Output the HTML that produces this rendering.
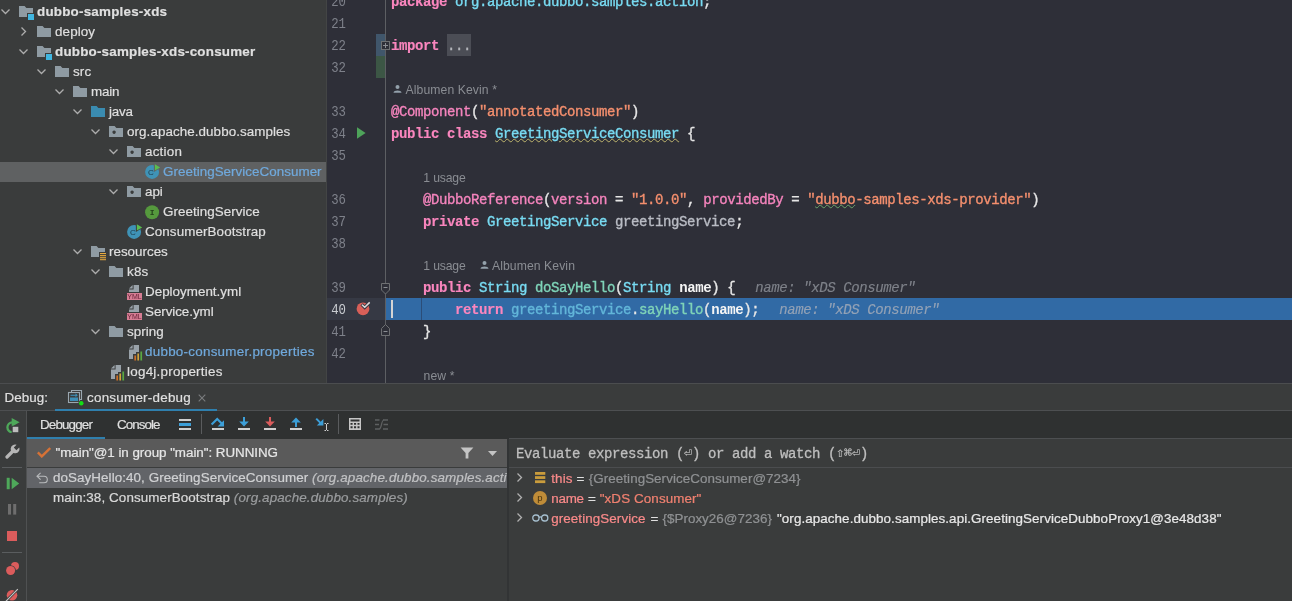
<!DOCTYPE html>
<html>
<head>
<meta charset="utf-8">
<title>dubbo-samples-xds</title>
<style>
*{box-sizing:border-box;margin:0;padding:0}
html,body{width:1292px;height:601px;overflow:hidden;background:#3a3c3c}
body{position:relative;font-family:"Liberation Sans",sans-serif;font-size:13px;color:#dcdcdc;-webkit-font-smoothing:antialiased}
.abs{position:absolute}
.mono{font-family:"Liberation Mono",monospace}
/* project tree */
#tree,#ed,#dbg{will-change:transform}
#tree{position:absolute;left:0;top:0;width:326px;height:383px;background:#3a3c3c;overflow:hidden}
.tr{position:absolute;left:0;width:326px;height:20px;line-height:20px;white-space:nowrap}
.tr.sel{background:#5f6162}
.tr .t{position:absolute;top:0;-webkit-text-stroke:0.22px;font-size:13.4px;color:#dfdfdf;letter-spacing:0}
.tr .t.b{font-weight:bold}

.tr svg{position:absolute;overflow:visible}
/* editor */
#ed{position:absolute;left:327px;top:0;width:965px;height:383px;background:#2e2f38;overflow:hidden}
#split{position:absolute;left:326px;top:0;width:1px;height:383px;background:#434545}
.ln{position:absolute;left:0;width:19px;text-align:right;transform:scaleX(0.88);transform-origin:100% 50%;font-family:"Liberation Mono",monospace;font-size:14px;letter-spacing:0;color:#7e818a;height:22px;line-height:22px;margin-top:1px}
.cl{position:absolute;left:64px;height:22px;line-height:22px;white-space:pre;font-family:"Liberation Mono",monospace;font-size:14px;letter-spacing:-0.4px;color:#e6e6e6;margin-top:1px;-webkit-text-stroke:0.35px}
.hint{position:absolute;height:22px;line-height:22px;margin-top:1px;white-space:pre;font-family:"Liberation Sans",sans-serif;font-size:12.2px;color:#8a8d93}
.k{color:#fa86be;font-weight:bold;-webkit-text-stroke:0.15px}
.ty{color:#78dbf2}

.st{color:#f48f6e}
.at{color:#f584bd}
.fn{color:#7ed3b8}
.fd{color:#b9bcc4}
.w{color:#f4f4f4;font-weight:bold;-webkit-text-stroke:0}
.iv{color:#7e8189;font-style:italic;-webkit-text-stroke:0.15px}
.iv.s{color:#93a2b6}
.ty2{color:#62b6d9}
.fold{color:#b4b6bb}
.wav{text-decoration:underline wavy #bdb36c 1px;text-underline-offset:0px}
.typo{text-decoration:underline wavy #6aa56a 1px;text-underline-offset:0px}
.sym{font-family:"DejaVu Sans Mono","DejaVu Sans",monospace;font-size:13.3px;-webkit-text-stroke:0.2px;display:inline-block;width:8px;text-align:center;overflow:visible;letter-spacing:0;line-height:20px;vertical-align:top}
/* debug */
#dbg{position:absolute;left:0;top:383px;width:1292px;height:218px;background:#3a3c3c}
.ui{position:absolute;white-space:nowrap;-webkit-text-stroke:0.22px;font-size:13.4px;color:#dfdfdf;line-height:20px;height:20px}
</style>
</head>
<body>
<div id="tree">
<div class="tr" style="top:2px"><svg class="abs" style="left:-0.5px;top:3.9000000000000004px" width="11" height="11" viewBox="0 0 11 11"><path d="M1.5 3.5 L5.5 7.5 L9.5 3.5" fill="none" stroke="#adadad" stroke-width="1.3"/></svg><svg class="abs" style="left:18px;top:2px" width="16" height="16" viewBox="0 0 16 16"><path d="M1 2 H6.6 L8.4 4 H15 V9 H9 V13 H1 Z" fill="#8f9ba3"/><rect x="10" y="10" width="6" height="6" fill="#40b6e0"/></svg><span class="t b" style="left:37px;letter-spacing:0.224px">dubbo-samples-xds</span></div>
<div class="tr" style="top:22px"><svg class="abs" style="left:17.5px;top:4.1px" width="11" height="11" viewBox="0 0 11 11"><path d="M3.5 1.5 L7.5 5.5 L3.5 9.5" fill="none" stroke="#adadad" stroke-width="1.3"/></svg><svg class="abs" style="left:36px;top:2px" width="16" height="16" viewBox="0 0 16 16"><path d="M1 2 H6.6 L8.4 4 H15 V13 H1 Z" fill="#8f9ba3"/></svg><span class="t" style="left:55px;letter-spacing:0.122px">deploy</span></div>
<div class="tr" style="top:42px"><svg class="abs" style="left:17.5px;top:3.9000000000000004px" width="11" height="11" viewBox="0 0 11 11"><path d="M1.5 3.5 L5.5 7.5 L9.5 3.5" fill="none" stroke="#adadad" stroke-width="1.3"/></svg><svg class="abs" style="left:36px;top:2px" width="16" height="16" viewBox="0 0 16 16"><path d="M1 2 H6.6 L8.4 4 H15 V9 H9 V13 H1 Z" fill="#8f9ba3"/><rect x="10" y="10" width="6" height="6" fill="#40b6e0"/></svg><span class="t b" style="left:55px;letter-spacing:0.209px">dubbo-samples-xds-consumer</span></div>
<div class="tr" style="top:62px"><svg class="abs" style="left:35.5px;top:3.9000000000000004px" width="11" height="11" viewBox="0 0 11 11"><path d="M1.5 3.5 L5.5 7.5 L9.5 3.5" fill="none" stroke="#adadad" stroke-width="1.3"/></svg><svg class="abs" style="left:54px;top:2px" width="16" height="16" viewBox="0 0 16 16"><path d="M1 2 H6.6 L8.4 4 H15 V13 H1 Z" fill="#8f9ba3"/></svg><span class="t" style="left:73px;letter-spacing:0.114px">src</span></div>
<div class="tr" style="top:82px"><svg class="abs" style="left:53.5px;top:3.9000000000000004px" width="11" height="11" viewBox="0 0 11 11"><path d="M1.5 3.5 L5.5 7.5 L9.5 3.5" fill="none" stroke="#adadad" stroke-width="1.3"/></svg><svg class="abs" style="left:72px;top:2px" width="16" height="16" viewBox="0 0 16 16"><path d="M1 2 H6.6 L8.4 4 H15 V13 H1 Z" fill="#8f9ba3"/></svg><span class="t" style="left:91px;letter-spacing:-0.183px">main</span></div>
<div class="tr" style="top:102px"><svg class="abs" style="left:71.5px;top:3.9000000000000004px" width="11" height="11" viewBox="0 0 11 11"><path d="M1.5 3.5 L5.5 7.5 L9.5 3.5" fill="none" stroke="#adadad" stroke-width="1.3"/></svg><svg class="abs" style="left:90px;top:2px" width="16" height="16" viewBox="0 0 16 16"><path d="M1 2 H6.6 L8.4 4 H15 V13 H1 Z" fill="#3a8bb0"/></svg><span class="t" style="left:109px;letter-spacing:-0.245px">java</span></div>
<div class="tr" style="top:122px"><svg class="abs" style="left:89.5px;top:3.9000000000000004px" width="11" height="11" viewBox="0 0 11 11"><path d="M1.5 3.5 L5.5 7.5 L9.5 3.5" fill="none" stroke="#adadad" stroke-width="1.3"/></svg><svg class="abs" style="left:108px;top:2px" width="16" height="16" viewBox="0 0 16 16"><path fill-rule="evenodd" d="M1 2 H6.6 L8.4 4 H15 V13 H1 Z M6.1 6.5 a1.7 1.7 0 1 0 0.001 0 Z" fill="#8f9ba3"/></svg><span class="t" style="left:127px;letter-spacing:0.077px">org.apache.dubbo.samples</span></div>
<div class="tr" style="top:142px"><svg class="abs" style="left:107.5px;top:3.9000000000000004px" width="11" height="11" viewBox="0 0 11 11"><path d="M1.5 3.5 L5.5 7.5 L9.5 3.5" fill="none" stroke="#adadad" stroke-width="1.3"/></svg><svg class="abs" style="left:126px;top:2px" width="16" height="16" viewBox="0 0 16 16"><path fill-rule="evenodd" d="M1 2 H6.6 L8.4 4 H15 V13 H1 Z M6.1 6.5 a1.7 1.7 0 1 0 0.001 0 Z" fill="#8f9ba3"/></svg><span class="t" style="left:145px;letter-spacing:0.228px">action</span></div>
<div class="tr sel" style="top:162px"><svg class="abs" style="left:144px;top:2px" width="16" height="16" viewBox="0 0 16 16"><circle cx="8.1" cy="7.9" r="7" fill="#3f93b7"/><path d="M9.9 -1.4 L17.4 3.3 L9.9 8 Z" fill="#5f6162"/><path d="M10.9 0.2 L16.2 3.4 L10.9 6.6 Z" fill="#5bbd4f"/><text x="6.9" y="10.6" font-family="Liberation Sans,sans-serif" font-size="8" text-anchor="middle" fill="#1f3a48">C</text></svg><span class="t" style="left:163px;letter-spacing:0.036px;color:#70a9dc">GreetingServiceConsumer</span></div>
<div class="tr" style="top:182px"><svg class="abs" style="left:107.5px;top:3.9000000000000004px" width="11" height="11" viewBox="0 0 11 11"><path d="M1.5 3.5 L5.5 7.5 L9.5 3.5" fill="none" stroke="#adadad" stroke-width="1.3"/></svg><svg class="abs" style="left:126px;top:2px" width="16" height="16" viewBox="0 0 16 16"><path fill-rule="evenodd" d="M1 2 H6.6 L8.4 4 H15 V13 H1 Z M6.1 6.5 a1.7 1.7 0 1 0 0.001 0 Z" fill="#8f9ba3"/></svg><span class="t" style="left:145px;letter-spacing:-0.025px">api</span></div>
<div class="tr" style="top:202px"><svg class="abs" style="left:144px;top:2px" width="16" height="16" viewBox="0 0 16 16"><circle cx="8.1" cy="8.3" r="7" fill="#55993d"/><text x="8.1" y="10.9" font-family="Liberation Mono,monospace" font-size="8" font-weight="bold" text-anchor="middle" fill="#23421a">I</text></svg><span class="t" style="left:163px;letter-spacing:0.046px">GreetingService</span></div>
<div class="tr" style="top:222px"><svg class="abs" style="left:126px;top:2px" width="16" height="16" viewBox="0 0 16 16"><circle cx="8.1" cy="7.9" r="7" fill="#3f93b7"/><path d="M9.9 -1.4 L17.4 3.3 L9.9 8 Z" fill="#3a3c3c"/><path d="M10.9 0.2 L16.2 3.4 L10.9 6.6 Z" fill="#5bbd4f"/><text x="6.9" y="10.6" font-family="Liberation Sans,sans-serif" font-size="8" text-anchor="middle" fill="#1f3a48">C</text></svg><span class="t" style="left:145px;letter-spacing:0.1px">ConsumerBootstrap</span></div>
<div class="tr" style="top:242px"><svg class="abs" style="left:71.5px;top:3.9000000000000004px" width="11" height="11" viewBox="0 0 11 11"><path d="M1.5 3.5 L5.5 7.5 L9.5 3.5" fill="none" stroke="#adadad" stroke-width="1.3"/></svg><svg class="abs" style="left:90px;top:2px" width="16" height="16" viewBox="0 0 16 16"><path d="M1 2 H6.6 L8.4 4 H15 V8 H9 V13 H1 Z" fill="#8f9ba3"/><g fill="#e9ab3f"><rect x="10" y="9" width="6" height="1.1"/><rect x="10" y="11.1" width="6" height="1.1"/><rect x="10" y="13.2" width="6" height="1.1"/><rect x="10" y="15.2" width="6" height="1"/></g></svg><span class="t" style="left:109px;letter-spacing:0.0px">resources</span></div>
<div class="tr" style="top:262px"><svg class="abs" style="left:89.5px;top:3.9000000000000004px" width="11" height="11" viewBox="0 0 11 11"><path d="M1.5 3.5 L5.5 7.5 L9.5 3.5" fill="none" stroke="#adadad" stroke-width="1.3"/></svg><svg class="abs" style="left:108px;top:2px" width="16" height="16" viewBox="0 0 16 16"><path d="M1 2 H6.6 L8.4 4 H15 V13 H1 Z" fill="#8f9ba3"/></svg><span class="t" style="left:127px;letter-spacing:0.185px">k8s</span></div>
<div class="tr" style="top:282px"><svg class="abs" style="left:126px;top:2px" width="16" height="16" viewBox="0 0 16 16"><path d="M7.6 1 H13 V8 H3 V5.6 H7.6 Z" fill="#99a2a9"/><path d="M6.6 1 L3 4.6 H6.6 Z" fill="#99a2a9"/><rect x="1" y="9" width="15" height="7" fill="#d67d93"/><text x="8.5" y="15.2" font-family="Liberation Sans,sans-serif" font-size="7" text-anchor="middle" fill="#6a2238" letter-spacing="0.1">YML</text></svg><span class="t" style="left:145px;letter-spacing:0.014px">Deployment.yml</span></div>
<div class="tr" style="top:302px"><svg class="abs" style="left:126px;top:2px" width="16" height="16" viewBox="0 0 16 16"><path d="M7.6 1 H13 V8 H3 V5.6 H7.6 Z" fill="#99a2a9"/><path d="M6.6 1 L3 4.6 H6.6 Z" fill="#99a2a9"/><rect x="1" y="9" width="15" height="7" fill="#d67d93"/><text x="8.5" y="15.2" font-family="Liberation Sans,sans-serif" font-size="7" text-anchor="middle" fill="#6a2238" letter-spacing="0.1">YML</text></svg><span class="t" style="left:145px;letter-spacing:-0.055px">Service.yml</span></div>
<div class="tr" style="top:322px"><svg class="abs" style="left:89.5px;top:3.9000000000000004px" width="11" height="11" viewBox="0 0 11 11"><path d="M1.5 3.5 L5.5 7.5 L9.5 3.5" fill="none" stroke="#adadad" stroke-width="1.3"/></svg><svg class="abs" style="left:108px;top:2px" width="16" height="16" viewBox="0 0 16 16"><path d="M1 2 H6.6 L8.4 4 H15 V13 H1 Z" fill="#8f9ba3"/></svg><span class="t" style="left:127px;letter-spacing:0.053px">spring</span></div>
<div class="tr" style="top:342px"><svg class="abs" style="left:126px;top:2px" width="16" height="16" viewBox="0 0 16 16"><path d="M7.6 1 H13 V8 H10 V10 H7 V15 H3 V5.6 H7.6 Z" fill="#99a2a9"/><path d="M6.6 1 L3 4.6 H6.6 Z" fill="#99a2a9"/><g stroke="#3a3c3c" stroke-width="1"><rect x="8" y="11" width="2.3" height="6" fill="#f57c20"/><rect x="11" y="9" width="2.3" height="8" fill="#f9bf3b"/><rect x="14" y="7" width="2.3" height="10" fill="#62c544"/></g></svg><span class="t" style="left:145px;letter-spacing:0.263px;color:#70a9dc">dubbo-consumer.properties</span></div>
<div class="tr" style="top:362px"><svg class="abs" style="left:108px;top:2px" width="16" height="16" viewBox="0 0 16 16"><path d="M7.6 1 H13 V8 H10 V10 H7 V15 H3 V5.6 H7.6 Z" fill="#99a2a9"/><path d="M6.6 1 L3 4.6 H6.6 Z" fill="#99a2a9"/><g stroke="#3a3c3c" stroke-width="1"><rect x="8" y="11" width="2.3" height="6" fill="#f57c20"/><rect x="11" y="9" width="2.3" height="8" fill="#f9bf3b"/><rect x="14" y="7" width="2.3" height="10" fill="#62c544"/></g></svg><span class="t" style="left:127px;letter-spacing:0.259px">log4j.properties</span></div>
</div>
<div id="split"></div>
<div id="ed">
<div class="abs" style="left:0;top:298px;width:59px;height:22px;background:#363944"></div>
<div class="abs" style="left:59px;top:298px;width:906px;height:22px;background:#316aa5"></div>
<div class="abs" style="left:94px;top:298px;width:1px;height:22px;background:#2b4d78"></div>
<div class="abs" style="left:120px;top:34px;width:24px;height:22px;background:#4b4d55"></div>
<div class="abs" style="left:49px;top:34px;width:9px;height:22px;background:#40566b"></div>
<div class="abs" style="left:49px;top:56px;width:9px;height:22px;background:#3c5645"></div>
<div class="abs" style="left:58px;top:0;width:1px;height:383px;background:#5d5f63"></div>
<div class="ln" style="top:-10px">20</div>
<div class="ln" style="top:12px">21</div>
<div class="ln" style="top:34px">22</div>
<div class="ln" style="top:56px">32</div>
<div class="ln" style="top:100px">33</div>
<div class="ln" style="top:122px">34</div>
<div class="ln" style="top:144px">35</div>
<div class="ln" style="top:188px">36</div>
<div class="ln" style="top:210px">37</div>
<div class="ln" style="top:232px">38</div>
<div class="ln" style="top:276px">39</div>
<div class="ln" style="top:298px;color:#c9ccd1">40</div>
<div class="ln" style="top:320px">41</div>
<div class="ln" style="top:342px">42</div>
<div class="cl" style="top:-10px"><span class="k">package</span> <span class="ty">org.apache.dubbo.samples.action</span>;</div>
<div class="cl" style="top:34px"><span class="k">import</span> <span class="fold">...</span></div>
<div class="cl" style="top:100px"><span class="at">@Component</span>(<span class="st">"annotatedConsumer"</span>)</div>
<div class="cl" style="top:122px"><span class="k">public</span> <span class="k">class</span> <span class="ty wav">GreetingServiceConsumer</span> {</div>
<div class="cl" style="top:188px">    <span class="at">@DubboReference</span>(<span class="at">version</span> = <span class="st">"1.0.0"</span>, <span class="at">providedBy</span> = <span class="st">"<span class="typo">dubbo</span>-samples-xds-provider"</span>)</div>
<div class="cl" style="top:210px">    <span class="k">private</span> <span class="ty">GreetingService</span> <span class="fd">greetingService</span>;</div>
<div class="cl" style="top:276px">    <span class="k">public</span> <span class="ty">String</span> <span class="fn">doSayHello</span>(<span class="ty">String</span> <span class="w">name</span>) {<span class="iv" style="margin-left:20px">name: "xDS Consumer"</span></div>
<div class="cl" style="top:298px">        <span class="k">return</span> <span class="ty2">greetingService</span>.<span class="fn">sayHello</span>(<span class="w">name</span>);<span class="iv s" style="margin-left:20px">name: "xDS Consumer"</span></div>
<div class="cl" style="top:320px">    }</div>
<svg class="abs" style="left:66px;top:84px" width="9" height="9" viewBox="0 0 9 9"><circle cx="4.5" cy="3" r="2" fill="#93a1ab"/><path d="M0.5 8.8 C0.5 5.8 8.5 5.8 8.5 8.8 Z" fill="#93a1ab"/></svg>
<div class="hint" style="left:78.5px;top:78px;letter-spacing:0.093px">Albumen Kevin *</div>
<div class="hint" style="left:96.30000000000001px;top:166px;letter-spacing:-0.154px">1 usage</div>
<div class="hint" style="left:96.30000000000001px;top:254px;letter-spacing:-0.154px">1 usage</div>
<svg class="abs" style="left:152.60000000000002px;top:260px" width="9" height="9" viewBox="0 0 9 9"><circle cx="4.5" cy="3" r="2" fill="#93a1ab"/><path d="M0.5 8.8 C0.5 5.8 8.5 5.8 8.5 8.8 Z" fill="#93a1ab"/></svg>
<div class="hint" style="left:165px;top:254px;letter-spacing:0.078px">Albumen Kevin</div>
<div class="hint" style="left:96.5px;top:364px;letter-spacing:0.1px">new *</div>
<svg class="abs" style="left:30px;top:127px" width="9" height="12" viewBox="0 0 9 12"><path d="M0 0.3 L8.6 6 L0 11.7 Z" fill="#4ea35a"/></svg>
<svg class="abs" style="left:29px;top:300px;overflow:visible" width="16" height="16" viewBox="0 0 16 16"><circle cx="7" cy="8.8" r="6.4" fill="#d85f58"/><path d="M5.6 4.4 L8.7 7.4 L14 2" fill="none" stroke="#363944" stroke-width="3.4"/><path d="M6 4.8 L8.7 7.3 L13.7 2.4" fill="none" stroke="#dcdcdc" stroke-width="1.5"/></svg>
<svg class="abs" style="left:54px;top:41px" width="9" height="9" viewBox="0 0 9 9"><rect x="0.5" y="0.5" width="8" height="8" fill="#2e2f38" stroke="#6e7073"/><path d="M2 4.5 H7 M4.5 2 V7" stroke="#8a8d93" stroke-width="1"/></svg>
<svg class="abs" style="left:54px;top:283px" width="9" height="12" viewBox="0 0 9 12"><path d="M0.5 0.5 H8.5 V7 L4.5 11 L0.5 7 Z" fill="#2e2f38" stroke="#6e7073"/><path d="M2.5 4.5 H6.5" stroke="#8a8d93"/></svg>
<svg class="abs" style="left:54px;top:324px" width="9" height="12" viewBox="0 0 9 12"><path d="M0.5 11.5 H8.5 V4.5 L4.5 0.5 L0.5 4.5 Z" fill="#2e2f38" stroke="#6e7073"/><path d="M2.5 7.5 H6.5" stroke="#8a8d93"/></svg>
<div class="abs" style="left:64px;top:300px;width:2px;height:18px;background:#d4d4d4"></div>
</div>
<div id="dbg">
<div class="abs" style="left:0;top:0;width:1292px;height:1px;background:#4b4d4f"></div>
<div class="ui" style="left:4.5px;top:4.5px;letter-spacing:0.052px;font-size:13.4px">Debug:</div>
<div class="ui" style="left:87px;top:4.5px;letter-spacing:0.25px;font-size:13.4px">consumer-debug</div>
<div class="abs" style="left:55px;top:26px;width:162px;height:2px;background:#2f7fad"></div>
<div class="abs" style="left:217px;top:27px;width:1075px;height:1px;background:#4d4f51"></div>
<div class="abs" style="left:0;top:27px;width:55px;height:1px;background:#4d4f51"></div>
<div class="abs" style="left:27px;top:28px;width:1265px;height:28px;background:#2f3131"></div>
<div class="abs" style="left:509px;top:55px;width:783px;height:1px;background:#4d4f51"></div>
<div class="abs" style="left:27px;top:54px;width:78px;height:2px;background:#2f7fad"></div>
<div class="ui" style="left:40px;top:31.5px;letter-spacing:-0.854px;font-size:13.4px">Debugger</div>
<div class="ui" style="left:117px;top:31.5px;letter-spacing:-0.949px;font-size:13.4px">Console</div>
<div class="abs" style="left:26px;top:28px;width:1px;height:190px;background:#4f5152"></div>
<div class="abs" style="left:27px;top:56px;width:480px;height:28px;background:#5a5a5a"></div>
<div class="abs" style="left:27px;top:84px;width:480px;height:1px;background:#3a3c3c"></div>
<div class="abs" style="left:27px;top:85px;width:480px;height:20px;background:#626468"></div>
<div class="ui" style="left:55.5px;top:59.5px;letter-spacing:-0.042px;font-size:13.4px;color:#e6e6e6">"main"@1 in group "main": RUNNING</div>
<div class="abs" style="left:27px;top:85px;width:480px;height:40px;overflow:hidden"><div class="ui" style="left:26px;top:0"><span style="color:#d0d1d3;letter-spacing:0.076px">doSayHello:40, GreetingServiceConsumer</span><span style="color:#c0c1c3;font-style:italic;letter-spacing:0.136px"> (org.apache.dubbo.samples.action)</span></div><div class="ui" style="left:26px;top:20px"><span style="color:#d9d9d9;letter-spacing:0.109px">main:38, ConsumerBootstrap</span><span style="color:#9a9c9e;font-style:italic;letter-spacing:0.136px"> (org.apache.dubbo.samples)</span></div></div>
<div class="abs" style="left:507px;top:56px;width:2px;height:162px;background:#323435"></div>
<div class="abs" style="left:509px;top:84px;width:783px;height:1px;background:#4b4d4f"></div>
<div style="left:516px;top:60px;height:22px;line-height:22px;font-size:14px;letter-spacing:-0.4px;color:#bebebe;white-space:pre;-webkit-text-stroke:0.3px" class="abs mono">Evaluate expression (<span class="sym">⏎</span>) or add a watch (<span class="sym">⇧</span><span class="sym">⌘</span><span class="sym">⏎</span>)</div>
<svg class="abs" style="left:513.8px;top:88.89999999999998px" width="11" height="11" viewBox="0 0 11 11"><path d="M3.5 1.5 L7.5 5.5 L3.5 9.5" fill="none" stroke="#b0b0b0" stroke-width="1.3"/></svg>
<svg class="abs" style="left:513.8px;top:108.89999999999998px" width="11" height="11" viewBox="0 0 11 11"><path d="M3.5 1.5 L7.5 5.5 L3.5 9.5" fill="none" stroke="#b0b0b0" stroke-width="1.3"/></svg>
<svg class="abs" style="left:513.8px;top:128.89999999999998px" width="11" height="11" viewBox="0 0 11 11"><path d="M3.5 1.5 L7.5 5.5 L3.5 9.5" fill="none" stroke="#b0b0b0" stroke-width="1.3"/></svg>
<svg class="abs" style="left:535px;top:89px" width="11" height="12" viewBox="0 0 11 12"><g fill="#c99c3c"><rect x="0" y="0" width="10.3" height="2.8"/><rect x="0" y="4.15" width="10.3" height="2.8"/><rect x="0" y="8.3" width="10.3" height="2.8"/></g></svg>
<svg class="abs" style="left:533px;top:108px" width="14" height="14" viewBox="0 0 14 14"><circle cx="7" cy="7" r="7" fill="#bf8c38"/><text x="7" y="10" font-family="Liberation Sans,sans-serif" font-size="9.5" text-anchor="middle" fill="#4a3510">p</text></svg>
<svg class="abs" style="left:532px;top:130px" width="17" height="10" viewBox="0 0 17 10"><g fill="none" stroke="#a6bfcf" stroke-width="1.3"><rect x="0.8" y="2" width="6.2" height="6" rx="2.8"/><rect x="9.6" y="2" width="6.2" height="6" rx="2.8"/><path d="M7 4.4 Q8.3 3.4 9.6 4.4"/></g></svg>
<div class="ui" style="left:551.2px;top:86px;letter-spacing:0.139px;font-size:13.4px;color:#fa8a8a">this</div>
<div class="ui" style="left:576.5px;top:86px;letter-spacing:-0.328px;font-size:13.4px;color:#e0e0e0">=</div>
<div class="ui" style="left:588.8px;top:86px;letter-spacing:0.056px;font-size:13.4px;color:#8f9193">{GreetingServiceConsumer@7234}</div>
<div class="ui" style="left:551.2px;top:106px;letter-spacing:-0.225px;font-size:13.4px;color:#fa8a8a">name</div>
<div class="ui" style="left:588px;top:106px;letter-spacing:-0.328px;font-size:13.4px;color:#e0e0e0">=</div>
<div class="ui" style="left:599.7px;top:106px;letter-spacing:0.107px;font-size:13.4px;color:#f08070">"xDS Consumer"</div>
<div class="ui" style="left:551.2px;top:126px;letter-spacing:0.09px;font-size:13.4px;color:#fa8a8a">greetingService</div>
<div class="ui" style="left:650.6px;top:126px;letter-spacing:-0.328px;font-size:13.4px;color:#e0e0e0">=</div>
<div class="ui" style="left:662.4px;top:126px;letter-spacing:0.046px;font-size:13.4px;color:#8f9193">{$Proxy26@7236}</div>
<div class="ui" style="left:777px;top:126px;letter-spacing:0.081px;font-size:13.4px;color:#e8e8e8">"org.apache.dubbo.samples.api.GreetingServiceDubboProxy1@3e48d38"</div>
<svg class="abs" style="left:67px;top:6px" width="17" height="17" viewBox="0 0 17 17"><g fill="none" stroke="#9aa7b0" stroke-width="1.1"><path d="M4.5 3.5 V1.5 H14.5 V10.5 H12.5"/><rect x="1.5" y="3.5" width="11" height="10"/></g><rect x="3" y="8.5" width="8" height="3.5" fill="#3d8eb5"/><path d="M3.5 6.3 H9.5" stroke="#3d8eb5" stroke-width="1.1"/><path d="M8.5 4.3 L10.8 6.3 L8.5 8.3 Z" fill="#3d8eb5"/><circle cx="14.3" cy="14.2" r="2.9" fill="#3a3c3c"/><circle cx="14.3" cy="14.2" r="2.2" fill="#14e014"/></svg>
<svg class="abs" style="left:198px;top:11px" width="8" height="8" viewBox="0 0 8 8"><path d="M0.7 0.7 L7.3 7.3 M7.3 0.7 L0.7 7.3" stroke="#7a7c7e" stroke-width="1.1"/></svg>
<svg class="abs" style="left:179px;top:36px" width="12" height="11" viewBox="0 0 12 11"><rect x="0" y="0" width="12" height="2" fill="#cfcfcf"/><rect x="0" y="4" width="12" height="3" fill="#3d9fd8"/><rect x="0" y="9" width="12" height="2" fill="#cfcfcf"/></svg>
<div class="abs" style="left:201px;top:31px;width:1px;height:20px;background:#5a5c5e"></div>
<div class="abs" style="left:338px;top:31px;width:1px;height:20px;background:#5a5c5e"></div>
<svg class="abs" style="left:210px;top:33px" width="16" height="16" viewBox="0 0 16 16"><path d="M1.6 8.6 L7.2 3 L12 7.8" fill="none" stroke="#3d9fd8" stroke-width="2.1"/><path d="M14 4.2 V10.6 H7.6 Z" fill="#3d9fd8"/><rect x="2" y="12" width="12" height="2" fill="#cfcfcf"/></svg>
<svg class="abs" style="left:236px;top:33px" width="16" height="16" viewBox="0 0 16 16"><rect x="7" y="1" width="2" height="6" fill="#3d9fd8"/><path d="M3.2 5.6 H12.8 L8 10.6 Z" fill="#3d9fd8"/><rect x="2" y="12" width="12" height="2" fill="#cfcfcf"/></svg>
<svg class="abs" style="left:262px;top:33px" width="16" height="16" viewBox="0 0 16 16"><rect x="7" y="1" width="2" height="6" fill="#db5c5c"/><path d="M3.2 5.6 H12.8 L8 10.6 Z" fill="#db5c5c"/><rect x="2" y="12" width="12" height="2" fill="#cfcfcf"/></svg>
<svg class="abs" style="left:288px;top:33px" width="16" height="16" viewBox="0 0 16 16"><rect x="7" y="5" width="2" height="6" fill="#3d9fd8"/><path d="M3.2 6.6 H12.8 L8 1.6 Z" fill="#3d9fd8"/><rect x="2" y="12" width="12" height="2" fill="#cfcfcf"/></svg>
<svg class="abs" style="left:314px;top:33px" width="16" height="16" viewBox="0 0 16 16"><path d="M2.2 2.6 L7 7.4" stroke="#3d9fd8" stroke-width="2"/><path d="M9.4 3 V9.6 H2.8 Z" fill="#3d9fd8"/><path d="M10.5 7.5 H12 M13 7.5 H14.5 M10.5 14.5 H12 M13 14.5 H14.5 M12.5 8 V14" stroke="#cfcfcf" stroke-width="1" fill="none"/></svg>
<svg class="abs" style="left:349px;top:35px" width="12" height="12" viewBox="0 0 12 12"><path fill-rule="evenodd" fill="#c6c6c6" d="M0 0 H12 V12 H0 Z M1.5 1.5 V3.5 H10.5 V1.5 Z M1.5 5 V6.8 H3.6 V5 Z M5 5 V6.8 H7.1 V5 Z M8.5 5 V6.8 H10.5 V5 Z M1.5 8.3 V10.3 H3.6 V8.3 Z M5 8.3 V10.3 H7.1 V8.3 Z M8.5 8.3 V10.3 H10.5 V8.3 Z"/></svg>
<svg class="abs" style="left:375px;top:36px" width="13" height="11" viewBox="0 0 13 11"><g stroke="#5e6061" stroke-width="1.6" fill="none"><path d="M0 1 H4.5 M8 1 H13 M0 5.5 H4 M8.5 5.5 H13 M0 10 H4.5 M8 10 H13"/><path d="M4 10 C7 10 6 1 9 1" stroke-width="1.2"/></g></svg>
<div class="abs" style="left:2px;top:84px;width:20px;height:1px;background:#5a5d5f"></div>
<div class="abs" style="left:2px;top:169px;width:20px;height:1px;background:#5a5d5f"></div>
<svg class="abs" style="left:5px;top:34px" width="16" height="16" viewBox="0 0 16 16"><path d="M7.2 15.2 A4.9 4.9 0 1 1 7.4 5.4" fill="none" stroke="#4ea85a" stroke-width="2.3"/><path d="M6.7 0.9 L14.6 5.3 L6.7 9.7 Z" fill="#4ea85a"/><rect x="6.7" y="8.8" width="7.6" height="7.4" fill="#3a3c3c"/><rect x="7.7" y="9.8" width="5.6" height="5.4" fill="#bdbdbd"/></svg>
<svg class="abs" style="left:5px;top:61px" width="15" height="15" viewBox="0 0 15 15"><path d="M2 13 L8 7" stroke="#b6b6b6" stroke-width="3.2" stroke-linecap="round"/><path d="M14.2 3.4 L11.4 6.2 L8.8 3.6 L11.6 0.8 A4.4 4.4 0 1 0 14.2 3.4 Z" fill="#b6b6b6"/></svg>
<svg class="abs" style="left:6px;top:94px" width="14" height="13" viewBox="0 0 14 13"><rect x="0.7" y="0.8" width="3" height="11.4" fill="#4ea85a"/><path d="M5.7 0.8 L13.2 6.5 L5.7 12.2 Z" fill="#4ea85a"/></svg>
<svg class="abs" style="left:8px;top:121px" width="9" height="11" viewBox="0 0 9 11"><rect x="0" y="0" width="3" height="10.6" fill="#6e6e6e"/><rect x="5.2" y="0" width="3" height="10.6" fill="#6e6e6e"/></svg>
<div class="abs" style="left:7px;top:148px;width:10px;height:10px;background:#db5c5c"></div>
<svg class="abs" style="left:5px;top:178px" width="16" height="16" viewBox="0 0 16 16"><circle cx="10" cy="5" r="4" fill="#db5c5c"/><circle cx="5.6" cy="9.5" r="5.3" fill="#3a3c3c"/><circle cx="5.6" cy="9.5" r="4.5" fill="#db5c5c"/></svg>
<svg class="abs" style="left:5px;top:205px" width="16" height="13" viewBox="0 0 16 13"><circle cx="7" cy="7.2" r="5.3" fill="#db5c5c"/><path d="M0.8 13.4 L12.8 1.2" stroke="#3a3c3c" stroke-width="2.6"/><path d="M0.8 13.4 L12.8 1.2" stroke="#c8c8c8" stroke-width="1.1"/></svg>
<svg class="abs" style="left:37px;top:64px" width="14" height="11" viewBox="0 0 14 11"><path d="M0.8 5.4 L4.8 9.4 L13.2 1" fill="none" stroke="#d67236" stroke-width="2.4"/></svg>
<svg class="abs" style="left:460px;top:64px" width="14" height="12" viewBox="0 0 14 12"><path d="M0.6 0.6 H13.4 L8.4 6 V11.6 H5.6 V6 Z" fill="#c4c4c4"/></svg>
<svg class="abs" style="left:488px;top:68px" width="9" height="5" viewBox="0 0 9 5"><path d="M0 0 H9 L4.5 5 Z" fill="#c4c4c4"/></svg>
<svg class="abs" style="left:36px;top:89px" width="13" height="12" viewBox="0 0 13 12"><path d="M4.6 0.8 L1 4.2 L4.6 7.6 M1 4.2 H8 A3.3 3.3 0 0 1 8 10.8 H3.2" fill="none" stroke="#b9bbbd" stroke-width="1.1"/></svg>
</div>
</body>
</html>
